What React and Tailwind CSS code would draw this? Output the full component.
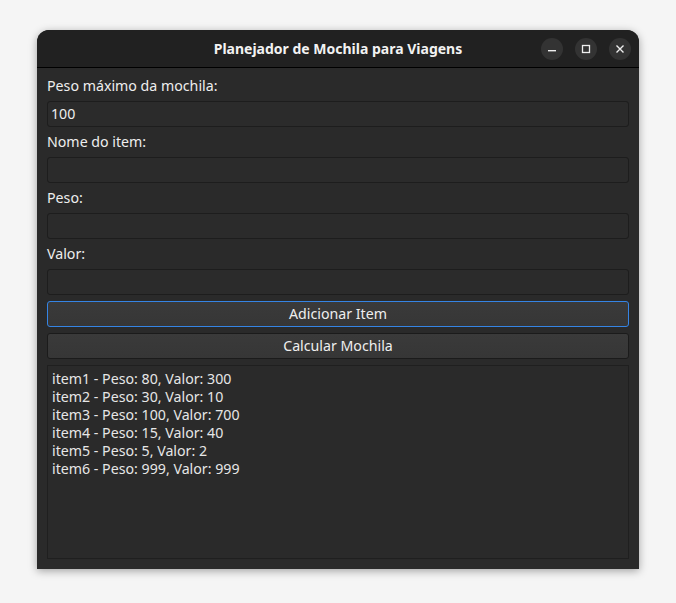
import React from "react";

const items = [
  "item1 - Peso: 80, Valor: 300",
  "item2 - Peso: 30, Valor: 10",
  "item3 - Peso: 100, Valor: 700",
  "item4 - Peso: 15, Valor: 40",
  "item5 - Peso: 5, Valor: 2",
  "item6 - Peso: 999, Valor: 999",
];

function Field({ label, value }) {
  return (
    <>
      <div className="h-[18px] leading-[17px] text-[14.2px] text-[#eeeeee]">{label}</div>
      <div className="h-[26px] rounded-[3px] border border-[#1d1d1d] bg-[#2b2b2b] px-[3px] text-[14.2px] leading-[24px] text-[#eeeeee]">
        {value}
      </div>
    </>
  );
}

export default function App() {
  return (
    <div
      className="min-h-screen bg-[#f5f5f5] pl-[37px] pt-[30px]"
      style={{ fontFamily: '"Noto Sans", "Open Sans", sans-serif' }}
    >
      <div className="flex h-[539px] w-[602px] flex-col overflow-hidden rounded-t-[12px] bg-[#2a2a2a] shadow-[0_2px_8px_rgba(0,0,0,0.35)]">
        <div className="relative flex h-[38px] shrink-0 items-center justify-center border-b border-black bg-[#212121]">
          <div className="text-[14px] font-bold text-[#f2f2f2]">Planejador de Mochila para Viagens</div>
          <div className="absolute right-[8px] top-[8px] flex gap-[12px]">
            <div className="flex h-[22px] w-[22px] items-center justify-center rounded-full bg-[#333333]">
              <svg width="10" height="10" viewBox="0 0 10 10">
                <rect x="1" y="6" width="8" height="1.4" fill="#eeeeee" />
              </svg>
            </div>
            <div className="flex h-[22px] w-[22px] items-center justify-center rounded-full bg-[#333333]">
              <svg width="10" height="10" viewBox="0 0 10 10">
                <rect x="1.5" y="1.5" width="7" height="7" fill="none" stroke="#eeeeee" strokeWidth="1.3" />
              </svg>
            </div>
            <div className="flex h-[22px] w-[22px] items-center justify-center rounded-full bg-[#333333]">
              <svg width="10" height="10" viewBox="0 0 10 10">
                <path d="M1.5 1.5 L8.5 8.5 M8.5 1.5 L1.5 8.5" stroke="#eeeeee" strokeWidth="1.4" fill="none" />
              </svg>
            </div>
          </div>
        </div>
        <div className="flex flex-1 flex-col gap-[6px] px-[10px] pb-[10px] pt-[9px]">
          <Field label="Peso máximo da mochila:" value="100" />
          <Field label="Nome do item:" value="" />
          <Field label="Peso:" value="" />
          <Field label="Valor:" value="" />
          <button className="h-[26px] rounded-[3px] border border-[#3584e4] bg-gradient-to-b from-[#3a3a3a] to-[#363636] text-[14.2px] leading-[24px] text-[#eeeeee]">
            Adicionar Item
          </button>
          <button className="h-[26px] rounded-[3px] border border-[#1b1b1b] bg-gradient-to-b from-[#3a3a3a] to-[#363636] text-[14.2px] leading-[24px] text-[#eeeeee]">
            Calcular Mochila
          </button>
          <div className="flex-1 border border-[#1f1f1f] bg-[#2a2a2a] px-[4px] pt-[4px] text-[14.2px] leading-[18px] text-[#e6e6e6]">
            {items.map((t) => (
              <div key={t}>{t}</div>
            ))}
          </div>
        </div>
      </div>
    </div>
  );
}
